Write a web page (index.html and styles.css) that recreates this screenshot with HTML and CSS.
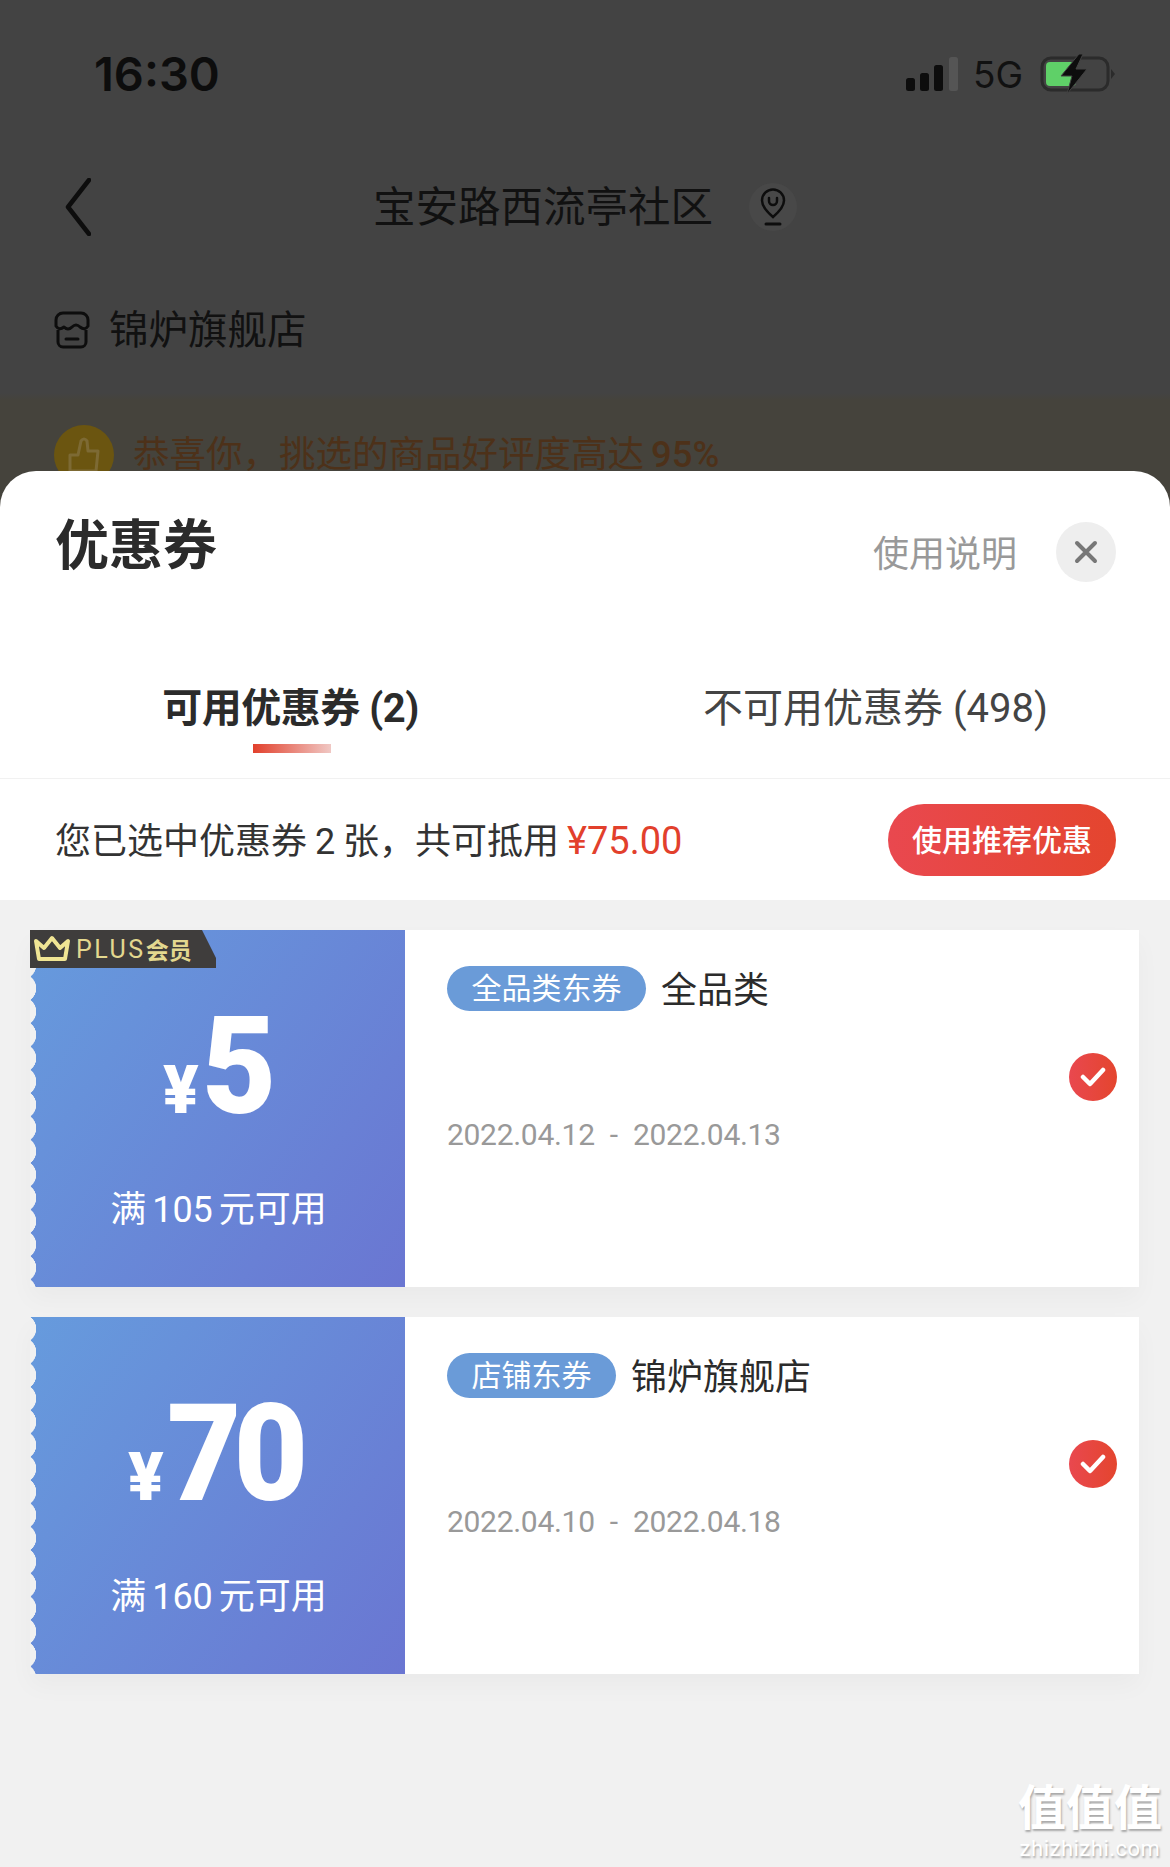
FILE: index.html
```html
<!DOCTYPE html>
<html lang="zh-CN">
<head>
    <meta charset="UTF-8">
    <meta name="viewport" content="width=device-width, initial-scale=1.0">
    <title>优惠券</title>
    <link rel="stylesheet" href="styles.css">
</head>
<body>
    <div class="backdrop">
        <div class="status-bar">
            <span class="time">16:30</span>
            <div class="status-right">
                <svg class="signal" width="52" height="34" viewBox="0 0 52 34">
                    <rect x="0" y="21" width="9" height="13" rx="2.5" fill="#0d0d0d"/>
                    <rect x="14" y="16" width="9" height="18" rx="2.5" fill="#0d0d0d"/>
                    <rect x="28" y="8" width="9" height="26" rx="2.5" fill="#0d0d0d"/>
                    <rect x="43" y="0" width="9" height="34" rx="2.5" fill="#555"/>
                </svg>
                <span class="network">5G</span>
                <svg class="battery" width="76" height="40" viewBox="0 0 76 40">
                    <rect x="2" y="4" width="66" height="32" rx="9" fill="none" stroke="#2b2b2b" stroke-width="3"/>
                    <rect x="6" y="8" width="30" height="24" rx="4" fill="#5fd068"/>
                    <path d="M71 15 L75 20 L71 25 Z" fill="#2b2b2b"/>
                    <path d="M39 0 L21 22 L32 22 L27 40 L47 15 L36 15 L43 0 Z" fill="#0d0d0d" stroke="#434343" stroke-width="1"/>
                </svg>
            </div>
        </div>
        <div class="nav-bar">
            <svg class="back" width="26" height="58" viewBox="0 0 26 58">
                <path d="M24 2 L3 29 L24 56" fill="none" stroke="#0d0d0d" stroke-width="4.5" stroke-linecap="round" stroke-linejoin="round"/>
            </svg>
            <span class="address">宝安路西流亭社区</span>
            <span class="pin-wrap">
                <svg width="26" height="38" viewBox="0 0 26 38">
                    <path d="M13 29 C6 23 2 18 2 12.500 A11 11 0 0 1 24 12.500 C24 18 20 23 13 29 Z" fill="none" stroke="#0d0d0d" stroke-width="2.500"/>
                    <path d="M9 10 V13 A4 4 0 0 0 17 13 V10" fill="none" stroke="#0d0d0d" stroke-width="2.500" stroke-linecap="round"/>
                    <path d="M6 36 H20" stroke="#0d0d0d" stroke-width="3" stroke-linecap="round"/>
                </svg>
            </span>
        </div>
        <div class="shop-row">
            <svg width="36" height="38" viewBox="0 0 36 38">
                <path d="M4 19 V31 A5 5 0 0 0 9 36 H27 A5 5 0 0 0 32 31 V19" fill="none" stroke="#0d0d0d" stroke-width="3"/>
                <path d="M9 2 H27 A7 7 0 0 1 34 9 V15 Q31 20 26 16 Q22 12 18 16 Q14 20 10 16 Q5 20 2 15 V9 A7 7 0 0 1 9 2 Z" fill="none" stroke="#0d0d0d" stroke-width="3" stroke-linejoin="round"/>
                <path d="M12 28 H24" stroke="#0d0d0d" stroke-width="3" stroke-linecap="round"/>
            </svg>
            <span class="shop-name">锦炉旗舰店</span>
        </div>
        <div class="notice">
            <span class="thumb">
                <svg width="36" height="40" viewBox="0 0 36 40">
                    <path d="M4 20 H12 L15 6 Q18 2 21 6 L22 16 H32 L30 36 H4 Z" fill="none" stroke="#7d6a34" stroke-width="3" stroke-linejoin="round"/>
                </svg>
            </span>
            <span class="notice-text">恭喜你&#65292;挑选的商品好评度高达 <b>95%</b></span>
        </div>
    </div>

    <div class="sheet">
        <div class="sheet-head">
            <h1>优惠券</h1>
            <span class="help">使用说明</span>
            <span class="close">
                <svg width="24" height="24" viewBox="0 0 24 24">
                    <path d="M3 3 L21 21 M21 3 L3 21" stroke="#777" stroke-width="4" stroke-linecap="round"/>
                </svg>
            </span>
        </div>
        <div class="tabs">
            <div class="tab tab-active">可用优惠券 (2)</div>
            <div class="tab">不可用优惠券 (498)</div>
        </div>
        <div class="summary">
            <span class="summary-text">您已选中优惠券 2 张&#65292;共可抵用 <em>¥75.00</em></span>
            <button class="use-btn">使用推荐优惠</button>
        </div>
    </div>

    <div class="list">
        <div class="coupon">
            <div class="coupon-left">
                <div class="plus-badge">
                    <svg width="38" height="28" viewBox="0 0 38 28">
                        <path d="M3 6 L11 13 L19 3 L27 13 L35 6 L32 24 H6 Z" fill="none" stroke="#f0e594" stroke-width="4" stroke-linejoin="round"/>
                    </svg>
                    <span class="plus-word">PLUS</span><span class="plus-cn">会员</span>
                </div>
                <div class="price"><span class="yen">¥</span><span class="amount">5</span></div>
                <div class="limit">满 105 元可用</div>
            </div>
            <div class="coupon-right">
                <div class="coupon-title">
                    <span class="tag">全品类东券</span>
                    <span class="scope">全品类</span>
                </div>
                <div class="date">2022.04.12 - 2022.04.13</div>
                <span class="check">
                    <svg width="26" height="22" viewBox="0 0 26 22">
                        <path d="M3 11 L10 18 L23 4" fill="none" stroke="#fff" stroke-width="4.500" stroke-linecap="round" stroke-linejoin="round"/>
                    </svg>
                </span>
            </div>
        </div>

        <div class="coupon">
            <div class="coupon-left">
                <div class="price"><span class="yen">¥</span><span class="amount">70</span></div>
                <div class="limit">满 160 元可用</div>
            </div>
            <div class="coupon-right">
                <div class="coupon-title">
                    <span class="tag">店铺东券</span>
                    <span class="scope">锦炉旗舰店</span>
                </div>
                <div class="date">2022.04.10 - 2022.04.18</div>
                <span class="check">
                    <svg width="26" height="22" viewBox="0 0 26 22">
                        <path d="M3 11 L10 18 L23 4" fill="none" stroke="#fff" stroke-width="4.500" stroke-linecap="round" stroke-linejoin="round"/>
                    </svg>
                </span>
            </div>
        </div>
    </div>

    <div class="watermark">
        <div class="wm-mark">值值值</div>
        <div class="wm-site">zhizhizhi.com</div>
    </div>
</body>
</html>
```

FILE: styles.css
```css
* {
    box-sizing: border-box;
}
html, body {
    margin: 0;
    padding: 0;
}
body {
    position: relative;
    width: 1170px;
    height: 1867px;
    overflow: hidden;
    font-family: "Roboto", "Noto Sans CJK SC", sans-serif;
    background-color: #f1f1f1;
    color: #333;
}

/* dimmed page behind the sheet */
.backdrop {
    height: 507px;
    overflow: hidden;
    background: linear-gradient(#434343 393px, #45433c 400px);
    color: #0d0d0d;
}
.status-bar {
    height: 148px;
    padding: 50px 54px 0 94px;
    display: flex;
    justify-content: space-between;
    align-items: flex-start;
}
.time {
    font-size: 47px;
    line-height: 48px;
    font-weight: 600;
    font-family: "Inter", sans-serif;
}
.status-right {
    display: flex;
    align-items: center;
    gap: 17px;
    height: 48px;
}
.network {
    font-size: 37px;
    font-family: "Inter", sans-serif;
    color: #111;
    margin-left: -2px;
}
.nav-bar {
    position: relative;
    height: 118px;
    padding-left: 65px;
    display: flex;
    align-items: center;
}
.address {
    margin-left: 282px;
    margin-top: 2px;
    font-size: 42.5px;
    line-height: 60px;
    color: #111;
}
.pin-wrap {
    margin-left: 36px;
    width: 48px;
    height: 48px;
    border-radius: 50%;
    background-color: #484848;
    display: flex;
    align-items: center;
    justify-content: center;
}
.shop-row {
    height: 67px;
    margin-top: 30px;
    padding-left: 54px;
    display: flex;
    align-items: center;
    gap: 19px;
    font-size: 39.500px;
    color: #111;
}
.shop-name {
    margin-bottom: 7px;
}
.notice {
    margin-top: 62px;
    padding-left: 54px;
    display: flex;
    align-items: center;
    gap: 19px;
}
.thumb {
    width: 60px;
    height: 60px;
    border-radius: 50%;
    background-color: #6b5510;
    display: flex;
    align-items: center;
    justify-content: center;
}
.notice-text {
    font-size: 36.500px;
    line-height: 50px;
    color: #4d3119;
    word-spacing: -2px;
}
.notice-text b {
    font-weight: 500;
}

/* coupon sheet */
.sheet {
    position: relative;
    margin-top: -36px;
    background-color: #fff;
    border-radius: 36px 36px 0 0;
}
.sheet-head {
    height: 160px;
    padding: 44px 54px 0 55px;
    display: flex;
    align-items: flex-start;
}
.sheet-head h1 {
    margin: 0;
    font-size: 54px;
    line-height: 64px;
    font-weight: 700;
    color: #2b2b2b;
    flex: 1;
}
.help {
    margin-top: 15px;
    font-size: 36px;
    line-height: 50px;
    color: #999;
}
.close {
    margin: 7px 0 0 39px;
    width: 60px;
    height: 60px;
    border-radius: 50%;
    background-color: #eee;
    display: flex;
    align-items: center;
    justify-content: center;
}
.tabs {
    height: 148px;
    border-bottom: 1px solid #f1f1f1;
    display: flex;
}
.tab {
    padding-top: 52px;
    font-size: 40px;
    line-height: 52px;
    color: #444;
    width: 589px;
    text-align: center;
    position: relative;
    white-space: nowrap;
}
.tab-active {
    font-weight: 700;
    color: #2b2b2b;
    width: 581px;
    letter-spacing: -0.5px;
}
.tab-active::after {
    content: "";
    position: absolute;
    left: 253px;
    top: 113px;
    width: 78px;
    height: 9px;
    background: linear-gradient(90deg, #e2402c, #f0c8c4);
}
.summary {
    height: 121px;
    padding: 0 54px 0 55px;
    display: flex;
    align-items: center;
    justify-content: space-between;
    font-size: 36px;
    color: #333;
}
.summary-text {
    margin-bottom: 4px;
    word-spacing: -1px;
}
.summary em {
    font-style: normal;
    font-size: 38px;
    color: #e2402c;
}
.use-btn {
    width: 228px;
    height: 72px;
    border: none;
    border-radius: 36px;
    background: linear-gradient(90deg, #e9484f, #e4452e);
    color: #fff;
    font-family: inherit;
    font-size: 30px;
    font-weight: 500;
    padding: 0 0 4px;
}

/* coupon list */
.list {
    padding: 30px 31px 0 30px;
    display: flex;
    flex-direction: column;
    gap: 30px;
}
.coupon {
    height: 357px;
    display: flex;
    background-color: #fff;
    box-shadow: 0 12px 24px rgba(0, 0, 0, 0.03);
}
.coupon-left {
    position: relative;
    width: 375px;
    background: linear-gradient(125deg, #669bdd, #6a76d2);
    border-radius: 0 0 0 5px;
    color: #fff;
    text-align: center;
}
.coupon-left::before {
    content: "";
    position: absolute;
    left: 0;
    top: 0;
    bottom: 0;
    width: 7px;
    background-image: radial-gradient(circle at -8px 50%, #f1f1f1 14px, transparent 14.5px);
    background-size: 7px 23.3px;
    background-repeat: repeat-y;
}
.plus-badge {
    position: absolute;
    left: 0;
    top: 0;
    z-index: 1;
    width: 186px;
    height: 38px;
    padding-left: 3px;
    background-color: #3f3d3c;
    clip-path: polygon(0 0, 172px 0, 186px 28px, 186px 38px, 0 38px);
    display: flex;
    align-items: center;
    color: #e3d88f;
    white-space: nowrap;
}
.plus-word {
    margin-left: 5px;
    font-size: 25px;
    letter-spacing: 2.5px;
}
.plus-cn {
    font-size: 23px;
    font-weight: 700;
}
.price {
    position: absolute;
    left: 0;
    right: 0;
    top: 72px;
    height: 130px;
    display: flex;
    justify-content: center;
    align-items: baseline;
    font-weight: 900;
}
.yen {
    font-size: 66px;
    line-height: 130px;
    margin-right: 3px;
}
.amount {
    font-size: 135px;
    line-height: 130px;
    letter-spacing: -8px;
    transform: scaleX(0.95);
    transform-origin: left;
}
.limit {
    position: absolute;
    left: 2px;
    right: 0;
    top: 256px;
    font-size: 36px;
    line-height: 48px;
    word-spacing: -3px;
}
.coupon-right {
    position: relative;
    flex: 1;
    padding: 36px 0 0 42px;
}
.coupon-title {
    display: flex;
    align-items: center;
    gap: 15px;
    height: 45px;
    font-size: 36px;
    color: #2b2b2b;
}
.scope {
    margin-bottom: 4px;
}
.tag {
    height: 45px;
    padding: 0 24.500px;
    border-radius: 23px;
    background-color: #6a9bd8;
    color: #fff;
    font-size: 30px;
    line-height: 45px;
}
.date {
    margin-top: 104px;
    font-size: 30px;
    line-height: 40px;
    color: #999;
    letter-spacing: -0.3px;
    word-spacing: 8px;
}
.check {
    position: absolute;
    right: 22px;
    top: 123px;
    width: 48px;
    height: 48px;
    border-radius: 50%;
    background: linear-gradient(90deg, #e9484f, #e4452e);
    display: flex;
    align-items: center;
    justify-content: center;
}

/* site watermark over the corner */
.watermark {
    position: absolute;
    left: 1018px;
    top: 1781px;
    width: 144px;
    text-align: center;
    color: #fff;
    text-shadow: 1px 2px 2px rgba(0, 0, 0, 0.3);
}
.wm-mark {
    font-size: 48px;
    line-height: 56px;
    font-weight: 700;
    white-space: nowrap;
}
.wm-site {
    font-size: 22px;
    line-height: 24px;
    letter-spacing: 0.5px;
}
```
